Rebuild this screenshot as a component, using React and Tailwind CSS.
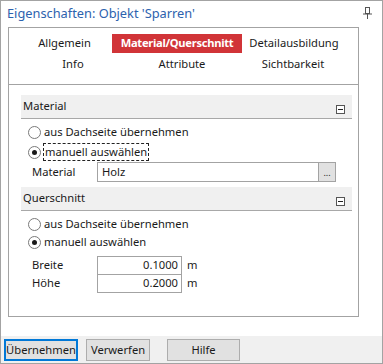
import React from "react";

function Radio({checked}){
    return(
        <span className="w-[13px] h-[13px] rounded-full border border-[#7a7a7a] bg-white flex items-center justify-center shrink-0">
            {checked && <span className="w-[5px] h-[5px] rounded-full bg-[#1a1a1a]"></span>}
        </span>
    )
}

function Minus(){
    return(
        <span className="w-[9px] h-[9px] border border-[#555] bg-white flex items-center justify-center">
            <span className="w-[5px] h-px bg-[#222]"></span>
        </span>
    )
}

function GroupHeader({title}){
    return(
        <div className="h-[24px] bg-[#f0f0f0] border-b border-[#a8a8a8] flex items-center justify-between pl-[2px] pr-[7px]">
            <span>{title}</span>
            <span className="mt-[6px]"><Minus /></span>
        </div>
    )
}

export default function App(){
    return(
        <div className="w-[383px] h-[364px] border border-[#a3a3a3] bg-white flex flex-col text-[11.2px] text-[#1a1a1a]" style={{fontFamily:'"Noto Sans", sans-serif'}}>
            <div className="h-[26px] flex items-center justify-between pl-[6px] pr-[10px]">
                <span className="text-[12.8px] text-[#2d62ae]">Eigenschaften: Objekt 'Sparren'</span>
                <svg width="9" height="12" viewBox="0 0 9 12" className="mt-[-2px]">
                    <rect x="2.5" y="0.5" width="4" height="6" fill="none" stroke="#555" />
                    <line x1="0" y1="7" x2="9" y2="7" stroke="#555" />
                    <line x1="4.5" y1="7" x2="4.5" y2="12" stroke="#555" />
                </svg>
            </div>
            <div className="ml-[7px] w-[351px] h-[290px] border border-[#a3a3a3] flex flex-col">
                <div className="h-[57px] border-b border-[#a3a3a3] pt-[6px]">
                    <div className="grid grid-cols-[111px_114px_120px] h-[19px] items-center">
                        <span className="text-center">Allgemein</span>
                        <span className="mx-[-8px] h-[19px] bg-[#d13438] text-white font-bold tracking-[-0.3px] flex items-center justify-center">Material/Querschnitt</span>
                        <span className="text-center">Detailausbildung</span>
                    </div>
                    <div className="grid grid-cols-[128px_90px_132px] h-[20px] mt-[1px] items-center">
                        <span className="text-center">Info</span>
                        <span className="text-center">Attribute</span>
                        <span className="text-center">Sichtbarkeit</span>
                    </div>
                </div>
                <div className="ml-[12px] mr-[6px] mt-[10px] flex flex-col">
                    <GroupHeader title="Material" />
                    <div className="h-[18px] mt-[4px] pl-[7px] flex items-center gap-[3px]">
                        <Radio />
                        <span>aus Dachseite übernehmen</span>
                    </div>
                    <div className="h-[18px] mt-[2px] pl-[7px] flex items-center gap-[2px]">
                        <Radio checked />
                        <span className="h-[18px] border border-dashed border-[#222] px-[1px] flex items-center leading-none">manuell auswählen</span>
                    </div>
                    <div className="h-[20px] mt-[1px] flex items-center">
                        <span className="w-[76px] pl-[11px]">Material</span>
                        <div className="w-[239px] h-[20px] border border-[#a3a3a3] flex">
                            <span className="flex-1 pl-[4px] flex items-center">Holz</span>
                            <span className="w-[17px] border-l border-[#a3a3a3] bg-[#e1e1e1] flex items-end justify-center pb-[4px] text-[9px] leading-none">...</span>
                        </div>
                    </div>
                    <div className="mt-[5px]">
                        <GroupHeader title="Querschnitt" />
                    </div>
                    <div className="h-[18px] mt-[4px] pl-[7px] flex items-center gap-[3px]">
                        <Radio />
                        <span>aus Dachseite übernehmen</span>
                    </div>
                    <div className="h-[18px] pl-[7px] flex items-center gap-[3px]">
                        <Radio checked />
                        <span>manuell auswählen</span>
                    </div>
                    <div className="h-[19px] mt-[5px] flex items-center">
                        <span className="w-[76px] pl-[11px]">Breite</span>
                        <span className="w-[85px] h-[19px] border border-[#a3a3a3] flex items-center justify-end pr-[3px]">0.1000</span>
                        <span className="ml-[5px]">m</span>
                    </div>
                    <div className="h-[19px] -mt-px flex items-center">
                        <span className="w-[76px] pl-[11px]">Höhe</span>
                        <span className="w-[85px] h-[19px] border border-[#a3a3a3] flex items-center justify-end pr-[3px]">0.2000</span>
                        <span className="ml-[5px]">m</span>
                    </div>
                </div>
            </div>
            <div className="flex-1"></div>
            <div className="h-[27px] bg-[#f0f0f0] flex items-start pt-[3px] pl-[3px]">
                <button className="w-[74px] h-[22px] border-2 border-[#0078d7] bg-[#e1e1e1] flex items-center justify-center">Übernehmen</button>
                <button className="ml-[8px] w-[64px] h-[22px] border border-[#adadad] bg-[#e1e1e1] flex items-center justify-center">Verwerfen</button>
                <button className="ml-[17px] w-[73px] h-[22px] border border-[#adadad] bg-[#e1e1e1] flex items-center justify-center">Hilfe</button>
            </div>
        </div>
    )
}
